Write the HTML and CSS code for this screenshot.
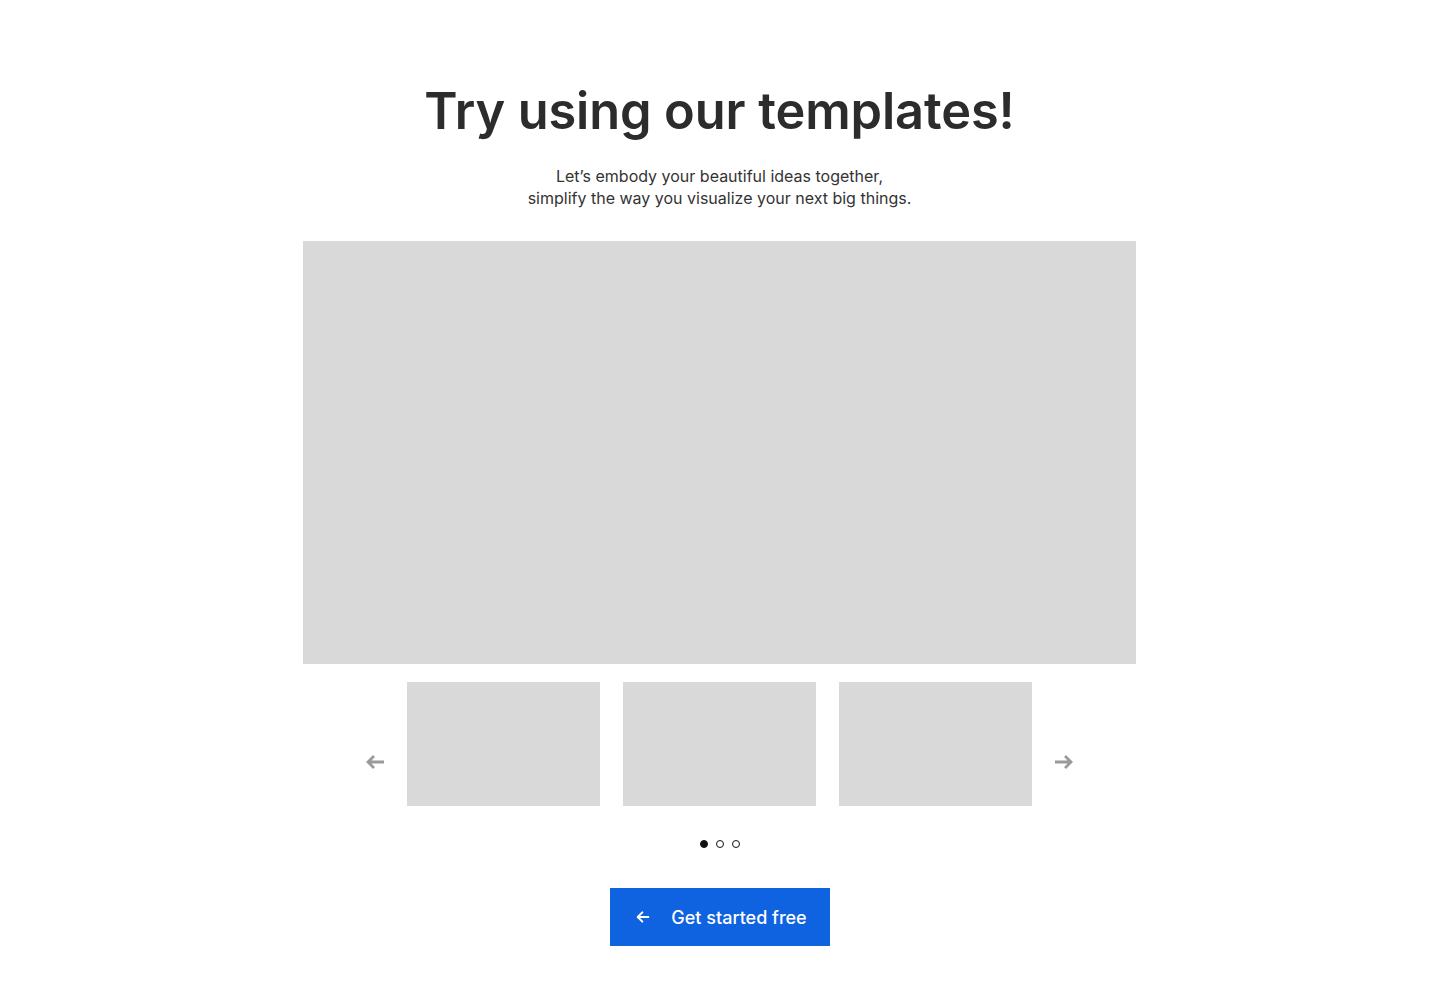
FILE: index.html
```html
<!DOCTYPE html>
<html lang="en">
<head>
<meta charset="utf-8">
<title>Templates</title>
<link rel="stylesheet" href="styles.css">
</head>
<body>
<main class="section">
  <h1 class="title">Try using our templates!</h1>
  <p class="subtitle">Let’s embody your beautiful ideas together,<br>simplify the way you visualize your next big things.</p>
  <div class="hero-image"></div>
  <div class="thumb-row">
    <button class="nav-arrow" aria-label="Previous">
      <svg width="19" height="16" viewBox="0 0 19 16" fill="none" stroke="currentColor" stroke-width="2.8" stroke-linejoin="miter"><path d="M19 8H3M9 2L3 8l6 6"/></svg>
    </button>
    <div class="thumb"></div>
    <div class="thumb"></div>
    <div class="thumb"></div>
    <button class="nav-arrow" aria-label="Next">
      <svg width="19" height="16" viewBox="0 0 19 16" fill="none" stroke="currentColor" stroke-width="2.8" stroke-linejoin="miter"><path d="M0 8h16M10 2l6 6-6 6"/></svg>
    </button>
  </div>
  <div class="dots">
    <span class="dot active"></span>
    <span class="dot"></span>
    <span class="dot"></span>
  </div>
  <a class="cta" href="#">
    <svg width="16" height="16" viewBox="0 0 24 24" fill="none" stroke="currentColor" stroke-width="3" stroke-linecap="round" stroke-linejoin="round"><path d="M20 12H5M11 5l-7 7 7 7"/></svg>
    <span>Get started free</span>
  </a>
</main>
</body>
</html>
```
FILE: styles.css
```css
* { box-sizing: border-box; }
html, body { margin: 0; padding: 0; background: #ffffff; }
body { font-family: Inter, "Noto Sans", sans-serif; color: #2d2d2d; }
.section {
  display: flex;
  flex-direction: column;
  align-items: center;
  padding-top: 80px;
  padding-right: 1px;
}
.title {
  margin: 0;
  font-size: 50.5px;
  font-weight: 600;
  line-height: 62px;
  letter-spacing: -0.1px;
  color: #2c2c2c;
}
.subtitle {
  margin: 23px 0 0;
  font-size: 16px;
  line-height: 22px;
  text-align: center;
  color: #333333;
}
.hero-image {
  margin-top: 32px;
  width: 833px;
  height: 423px;
  background: #d9d9d9;
}
.thumb-row {
  margin-top: 18px;
  display: flex;
  align-items: center;
  gap: 23px;
}
.thumb {
  width: 193px;
  height: 124px;
  background: #d9d9d9;
}
.nav-arrow {
  border: 0;
  background: none;
  padding: 0;
  margin-top: 35px;
  width: 19px;
  height: 16px;
  color: #9a9a9a;
  display: flex;
  align-items: center;
  justify-content: center;
  cursor: pointer;
}
.nav-arrow svg { display: block; }
.dots {
  margin-top: 34px;
  display: flex;
  gap: 8px;
}
.dot {
  width: 8px;
  height: 8px;
  border-radius: 50%;
  border: 1px solid #111111;
  background: #ffffff;
}
.dot.active { background: #111111; }
.cta {
  margin-top: 40px;
  width: 220px;
  height: 58px;
  padding-left: 3px;
  background: #0f62e0;
  color: #ffffff;
  text-decoration: none;
  display: flex;
  align-items: center;
  justify-content: center;
  gap: 20px;
  font-size: 18px;
  font-weight: 500;
}
```
